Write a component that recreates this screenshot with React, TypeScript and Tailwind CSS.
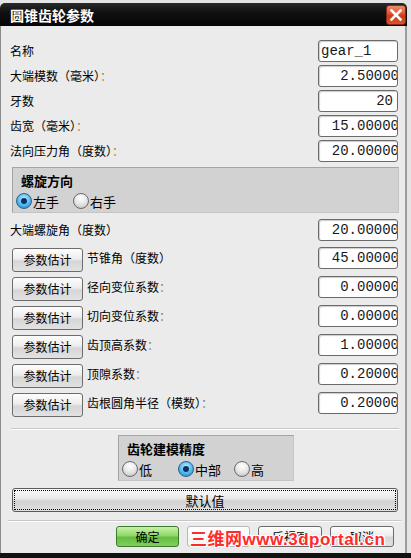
import { ReactNode } from "react";

const CJK = "font-['Noto_Sans_CJK_SC','Noto_Sans',sans-serif]";

function Field({ value, mode = "num" }: { value: string; mode?: "num" | "int" | "text" }) {
  const align = mode === "text" ? "justify-start pl-[2px]" : "justify-end";
  const tail = mode === "num" ? "-mr-[2px]" : mode === "int" ? "mr-[4px]" : "";
  return (
    <div
      className={`flex h-[22px] w-[80px] shrink-0 items-center overflow-hidden rounded-[3px] border border-[#6a6a6a] bg-white shadow-[inset_1px_1px_1px_rgba(0,0,0,0.2)] font-['Liberation_Mono',monospace] text-[14px] leading-none text-[#1a1a1a] ${align}`}
    >
      <span className={`shrink-0 whitespace-nowrap ${tail}`}>{value}</span>
    </div>
  );
}

function Colon({ warm = false }: { warm?: boolean }) {
  return <span className={warm ? "text-[#c07a30]" : "text-[#7a8090]"}>：</span>;
}

function Radio({ checked, label }: { checked: boolean; label: string }) {
  return (
    <div className="flex items-center gap-[1px]">
      {checked ? (
        <span className="flex h-[16px] w-[16px] items-center justify-center rounded-full border border-[#2a5f8f] bg-[radial-gradient(circle_at_50%_35%,#bfefff_0%,#4fb8ea_55%,#1f7fc0_100%)]">
          <span className="h-[6px] w-[6px] rounded-full bg-[#0b2f6a]" />
        </span>
      ) : (
        <span className="h-[16px] w-[16px] rounded-full border border-[#6a6a6a] bg-[radial-gradient(circle_at_50%_30%,#ffffff_0%,#e6e6e6_50%,#b8b8b8_100%)]" />
      )}
      <span className="text-[13px] leading-none text-black">{label}</span>
    </div>
  );
}

function GrayButton({ children, className = "" }: { children: ReactNode; className?: string }) {
  return (
    <div
      className={`flex items-center justify-center rounded-[3px] border border-[#6c6c6c] bg-[linear-gradient(#fdfdfd,#ededed_45%,#d6d6d6_55%,#e2e2e2)] text-[12px] leading-none text-black ${className}`}
    >
      {children}
    </div>
  );
}

function LabelRow({ label, field }: { label: ReactNode; field: ReactNode }) {
  return (
    <div className="flex h-[22px] w-[388px] items-center justify-between">
      <span className="text-[12px] leading-none text-black">{label}</span>
      {field}
    </div>
  );
}

function EstimateRow({ label, value }: { label: ReactNode; value: string }) {
  return (
    <div className="flex h-[25px] w-[388px] items-start">
      <GrayButton className="ml-[2px] mt-[1px] h-[24px] w-[71px]">参数估计</GrayButton>
      <span className="ml-[4px] mt-[5px] flex-1 text-[12px] leading-none text-black">{label}</span>
      <Field value={value} />
    </div>
  );
}

export default function App() {
  return (
    <div className={`relative h-[558px] w-[411px] overflow-hidden bg-[#e4e4e4] ${CJK}`}>
      <div className="flex w-[407px] flex-col pt-[3px]">
        {/* title bar */}
        <div className="flex h-[23px] items-center justify-between rounded-t-[5px] bg-[linear-gradient(#2a2a2a,#111111_40%,#050505)] pl-[10px] pr-[1px]">
          <span className="text-[14px] font-bold leading-none text-white">圆锥齿轮参数</span>
          <div className="flex h-[20px] w-[20px] items-center justify-center rounded-[3px] border border-[#8a2a14] bg-[linear-gradient(#f28a6a,#e0502c_45%,#c83a18_55%,#d9552e)]">
            <svg width="12" height="12" viewBox="0 0 12 12">
              <path d="M1.5 1.5 L10.5 10.5 M10.5 1.5 L1.5 10.5" stroke="white" strokeWidth="2.6" strokeLinecap="square" />
            </svg>
          </div>
        </div>

        {/* body */}
        <div className="flex h-[527px] flex-col border-l border-r-2 border-l-[#8c8c8c] border-r-[#9c9c9c] bg-[#ebebeb] pl-[9px]">
          <div className="mt-[14px] flex flex-col gap-[3px]">
            <LabelRow label="名称" field={<Field value="gear_1" mode="text" />} />
            <LabelRow label={<>大端模数（毫米）<Colon warm /></>} field={<Field value="2.50000" />} />
            <LabelRow label="牙数" field={<Field value="20" mode="int" />} />
            <LabelRow label={<>齿宽（毫米）<Colon warm /></>} field={<Field value="15.00000" />} />
            <LabelRow label={<>法向压力角（度数）<Colon warm /></>} field={<Field value="20.00000" />} />
          </div>

          <div className="ml-[2px] mt-[5px] flex h-[46px] w-[387px] flex-col border border-[#a4a4a4] border-b-[#c4c4c4] border-r-[#c4c4c4] bg-[#d2d2d2] pl-[3px] pt-[6px]">
            <span className="ml-[5px] text-[13px] font-bold leading-none text-black">螺旋方向</span>
            <div className="mt-[6px] flex items-center gap-[14px]">
              <Radio checked label="左手" />
              <Radio checked={false} label="右手" />
            </div>
          </div>

          <div className="mt-[6px]">
            <LabelRow label="大端螺旋角（度数）" field={<Field value="20.00000" />} />
          </div>

          <div className="mt-[6px] flex flex-col gap-[4px]">
            <EstimateRow label="节锥角（度数）" value="45.00000" />
            <EstimateRow label={<>径向变位系数<Colon /></>} value="0.00000" />
            <EstimateRow label={<>切向变位系数<Colon /></>} value="0.00000" />
            <EstimateRow label={<>齿顶高系数<Colon /></>} value="1.00000" />
            <EstimateRow label={<>顶隙系数<Colon /></>} value="0.20000" />
            <EstimateRow label={<>齿根圆角半径（模数）<Colon /></>} value="0.20000" />
          </div>

          <div className="ml-[1px] mt-[11px] h-[2px] w-[388px] border-t border-[#c6c6c6] border-b border-b-white" />

          <div className="ml-[108px] mt-[5px] flex h-[46px] w-[176px] flex-col border border-[#a4a4a4] border-b-[#c4c4c4] border-r-[#c4c4c4] bg-[#d2d2d2] pl-[3px] pt-[6px]">
            <span className="ml-[5px] text-[13px] font-bold leading-none text-black">齿轮建模精度</span>
            <div className="mt-[6px] flex items-center">
              <div className="w-[56px]">
                <Radio checked={false} label="低" />
              </div>
              <div className="w-[56px]">
                <Radio checked label="中部" />
              </div>
              <Radio checked={false} label="高" />
            </div>
          </div>

          <div className="ml-[2px] mt-[7px] flex h-[24px] w-[386px] rounded-[3px] border border-[#5a5a5a] bg-[linear-gradient(#fafafa,#e8e8e8_45%,#d2d2d2_55%,#e0e0e0)] p-[1px]">
            <div className="flex flex-1 items-center justify-center border border-dotted border-black text-[13px] leading-none text-black">
              默认值
            </div>
          </div>

          <div className="-ml-[2px] mt-[8px] h-[2px] w-[393px] border-t border-[#c6c6c6] border-b border-b-white" />

          <div className="ml-[106px] mt-[4px] flex gap-[8px]">
            <div className="flex h-[21px] w-[63px] items-center justify-center rounded-[3px] border border-[#3f7a2c] bg-[linear-gradient(#c6f2a8,#8fd868_45%,#64be40_55%,#80cf5c)] text-[12px] leading-none text-black">
              确定
            </div>
            <div className="flex h-[21px] w-[63px] items-center justify-center rounded-[3px] border border-[#b8b8b8] bg-[linear-gradient(#ffffff,#f2f2f2)] text-[12px] leading-none text-[#a8a8a8]">
              应用
            </div>
            <GrayButton className="h-[21px] w-[64px]">后视图</GrayButton>
            <GrayButton className="h-[21px] w-[64px]">取消</GrayButton>
          </div>
        </div>
      </div>
      <div className="h-[5px] w-[411px] bg-[#121212]" />

      {/* watermark */}
      <div className="absolute left-[190px] top-[531px] whitespace-nowrap font-['Liberation_Sans','Noto_Sans_CJK_SC',sans-serif] text-[17px] font-bold leading-none tracking-[0.5px] text-[#ff2a2a] [text-shadow:1px_0_0_#fff,-1px_0_0_#fff,0_1px_0_#fff,0_-1px_0_#fff,1px_1px_0_#fff,-1px_-1px_0_#fff,1px_-1px_0_#fff,-1px_1px_0_#fff]">
        三维网www.3dportal.cn
      </div>
    </div>
  );
}
